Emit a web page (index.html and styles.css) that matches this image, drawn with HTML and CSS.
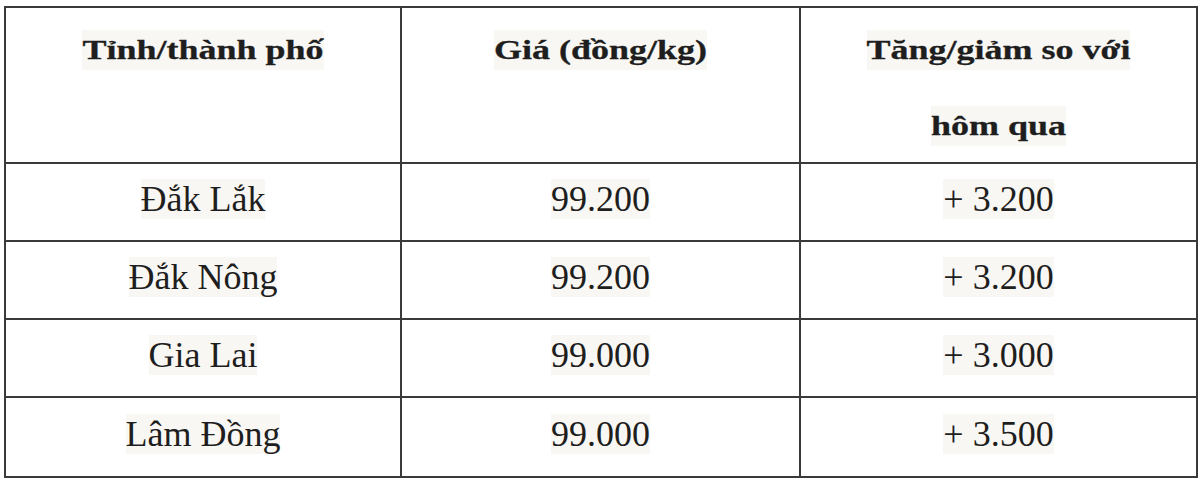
FILE: index.html
```html
<!DOCTYPE html>
<html lang="vi">
<head>
<meta charset="utf-8">
<title>Giá cà phê</title>
<link rel="stylesheet" href="styles.css">
</head>
<body>
<table class="price">
  <colgroup>
    <col class="c1"><col class="c2"><col class="c3">
  </colgroup>
  <thead>
    <tr class="head">
      <th><span class="hl"><span class="sq">Tỉnh/thành phố</span></span></th>
      <th><span class="hl"><span class="sq">Giá (đồng/kg)</span></span></th>
      <th><span class="hl"><span class="sq">Tăng/giảm so với</span></span><br><span class="hl"><span class="sq">hôm qua</span></span></th>
    </tr>
  </thead>
  <tbody>
    <tr><td><span class="txt">Đắk Lắk</span></td><td><span class="txt">99.200</span></td><td><span class="txt">+ 3.200</span></td></tr>
    <tr><td><span class="txt">Đắk Nông</span></td><td><span class="txt">99.200</span></td><td><span class="txt">+ 3.200</span></td></tr>
    <tr><td><span class="txt">Gia Lai</span></td><td><span class="txt">99.000</span></td><td><span class="txt">+ 3.000</span></td></tr>
    <tr class="last"><td><span class="txt">Lâm Đồng</span></td><td><span class="txt">99.000</span></td><td><span class="txt">+ 3.500</span></td></tr>
  </tbody>
</table>
</body>
</html>
```

FILE: styles.css
```css
html, body {
  margin: 0;
  padding: 0;
  background: #ffffff;
}
body {
  padding: 6px 0 0 4px;
  font-family: "Liberation Serif", "Times New Roman", serif;
  color: #1e1e1e;
}
.price {
  border-collapse: collapse;
  width: 1192px;
  table-layout: fixed;
}
.c1 { width: 396px; }
.c2 { width: 399px; }
.c3 { width: 397px; }
.price th,
.price td {
  border: 2px solid #3a3a3a;
  text-align: center;
  padding: 0;
}
.price th {
  font-weight: bold;
  font-size: 36px;
  line-height: 76px;
  height: 154px;
  vertical-align: top;
  padding-top: 0;
}
.hl {
  display: inline-block;
  background: #f8f7f3;
  line-height: 40px;
  height: 40px;
  vertical-align: middle;
}
.sq {
  display: inline-block;
  transform: scaleY(0.73);
  -webkit-text-stroke: 0.4px #1e1e1e;
}
.price td {
  font-size: 36px;
  height: 70px;
  vertical-align: middle;
  padding-bottom: 6px;
  line-height: 40px;
}
.price .last td {
  height: 72px;
}
.txt {
  background: #f8f7f3;
}
```
